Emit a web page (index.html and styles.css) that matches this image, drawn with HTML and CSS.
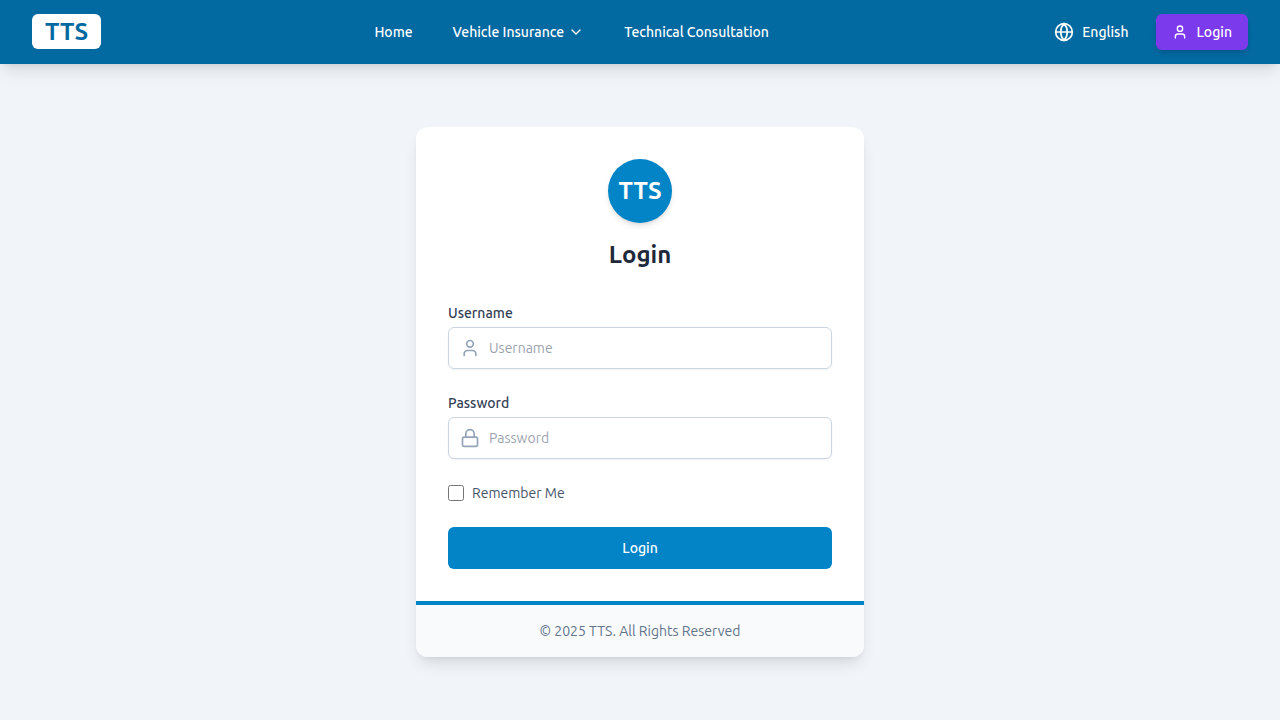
FILE: index.html
```html
<!DOCTYPE html>
<html lang="en">
<head>
<meta charset="utf-8">
<meta name="viewport" content="width=device-width, initial-scale=1">
<title>Login - TTS</title>
<link rel="stylesheet" href="styles.css">
</head>
<body>
<header class="topbar">
  <a class="brand" href="#"><span class="brand-mark">TTS</span></a>
  <nav class="nav" aria-label="Main">
    <a class="nav-link" href="#">Home</a>
    <button class="nav-link" type="button">Vehicle Insurance
      <svg class="icon-sm" viewBox="0 0 24 24" aria-hidden="true"><path d="m6 9 6 6 6-6"/></svg>
    </button>
    <a class="nav-link" href="#">Technical Consultation</a>
  </nav>
  <div class="actions">
    <button class="language" type="button">
      <svg class="icon-md" viewBox="0 0 24 24" aria-hidden="true"><circle cx="12" cy="12" r="10"/><path d="M12 2a14.5 14.5 0 0 0 0 20 14.5 14.5 0 0 0 0-20M2 12h20"/></svg>
      English
    </button>
    <a class="login-link" href="#">
      <svg class="icon-sm" viewBox="0 0 24 24" aria-hidden="true"><path d="M19 21v-2a4 4 0 0 0-4-4H9a4 4 0 0 0-4 4v2"/><circle cx="12" cy="7" r="4"/></svg>
      Login
    </a>
  </div>
</header>
<main class="page">
  <section class="card">
    <form class="form">
      <div class="heading">
        <div class="logo">TTS</div>
        <h1 class="title">Login</h1>
      </div>
      <div class="field">
        <label class="label" for="username">Username</label>
        <div class="control">
          <svg class="icon-md" viewBox="0 0 24 24" aria-hidden="true"><path d="M19 21v-2a4 4 0 0 0-4-4H9a4 4 0 0 0-4 4v2"/><circle cx="12" cy="7" r="4"/></svg>
          <input class="input" id="username" type="text" placeholder="Username">
        </div>
      </div>
      <div class="field">
        <label class="label" for="password">Password</label>
        <div class="control">
          <svg class="icon-md" viewBox="0 0 24 24" aria-hidden="true"><rect x="3" y="11" width="18" height="11" rx="2"/><path d="M7 11V7a5 5 0 0 1 10 0v4"/></svg>
          <input class="input" id="password" type="password" placeholder="Password">
        </div>
      </div>
      <div class="remember">
        <input class="checkbox" id="remember" type="checkbox">
        <label for="remember">Remember Me</label>
      </div>
      <button class="submit" type="submit">Login</button>
    </form>
    <footer class="card-footer">© 2025 TTS. All Rights Reserved</footer>
  </section>
</main>
</body>
</html>
```
FILE: styles.css
```css
* { box-sizing: border-box; }

body {
  margin: 0;
  min-height: 100vh;
  display: flex;
  flex-direction: column;
  background: #f1f5f9;
  color: #1e293b;
  font-family: Ubuntu, "Open Sans", "Noto Sans", sans-serif;
  font-size: 14px;
  line-height: 20px;
}

button, input { font: inherit; }
button { border: 0; background: none; cursor: pointer; }
a { color: inherit; text-decoration: none; }

svg {
  flex: none;
  fill: none;
  stroke: currentColor;
  stroke-width: 2;
  stroke-linecap: round;
  stroke-linejoin: round;
}

.icon-sm { width: 16px; height: 16px; }
.icon-md { width: 20px; height: 20px; }

.topbar {
  display: flex;
  align-items: center;
  justify-content: space-between;
  height: 64px;
  padding: 0 32px;
  background: #0369a1;
  color: #fff;
  font-weight: 500;
  box-shadow: 0 10px 15px -3px rgb(0 0 0 / 10%), 0 4px 6px -4px rgb(0 0 0 / 10%);
}

.brand {
  font-size: 24px;
  font-weight: 700;
  line-height: 32px;
}

.brand-mark {
  padding: 4px 13px;
  border-radius: 6px;
  background: #fff;
  color: #0369a1;
}

.nav { display: flex; gap: 16px; }

.nav-link {
  display: flex;
  align-items: center;
  gap: 4px;
  padding: 8px 12px;
  color: inherit;
}

.actions { display: flex; align-items: center; gap: 16px; }

.language {
  display: flex;
  align-items: center;
  gap: 8px;
  padding: 8px 12px;
  color: inherit;
}

.login-link {
  display: flex;
  align-items: center;
  gap: 8px;
  padding: 8px 16px;
  border-radius: 6px;
  background: #7c3aed;
  box-shadow: 0 4px 6px -1px rgb(0 0 0 / 10%), 0 2px 4px -2px rgb(0 0 0 / 10%);
}

.page {
  flex: 1;
  display: flex;
  align-items: center;
  justify-content: center;
  padding: 48px 16px;
}

.card {
  width: 100%;
  max-width: 448px;
  overflow: hidden;
  border-radius: 12px;
  background: #fff;
  box-shadow: 0 10px 15px -3px rgb(0 0 0 / 10%), 0 4px 6px -4px rgb(0 0 0 / 10%);
}

.form {
  display: flex;
  flex-direction: column;
  gap: 24px;
  padding: 32px;
}

.heading {
  display: flex;
  flex-direction: column;
  align-items: center;
  gap: 16px;
  padding-bottom: 8px;
}

.logo {
  display: grid;
  place-items: center;
  width: 64px;
  height: 64px;
  border-radius: 50%;
  background: #0284c7;
  color: #fff;
  font-size: 24px;
  font-weight: 700;
  box-shadow: 0 4px 6px -1px rgb(0 0 0 / 10%), 0 2px 4px -2px rgb(0 0 0 / 10%);
}

.title {
  margin: 0;
  font-size: 24px;
  font-weight: 700;
  line-height: 32px;
}

.field { display: flex; flex-direction: column; gap: 4px; }
.label { color: #334155; font-weight: 500; }

.control {
  display: flex;
  align-items: center;
  gap: 9px;
  height: 42px;
  padding: 0 11px;
  border: 1px solid #cbd5e1;
  border-radius: 6px;
  color: #94a3b8;
  box-shadow: 0 1px 2px rgb(0 0 0 / 5%);
}

.input {
  flex: 1;
  min-width: 0;
  padding: 0;
  border: 0;
  outline: 0;
  background: transparent;
  color: #1e293b;
}
.input::placeholder { color: #9ca3af; }

.remember { display: flex; align-items: center; gap: 8px; color: #475569; }
.checkbox { width: 16px; height: 16px; margin: 0; }

.submit {
  height: 42px;
  border-radius: 6px;
  background: #0284c7;
  color: #fff;
  font-weight: 500;
}

.card-footer {
  padding: 16px 32px;
  border-top: 4px solid #0284c7;
  background: #f8fafc;
  color: #64748b;
  text-align: center;
}
```
